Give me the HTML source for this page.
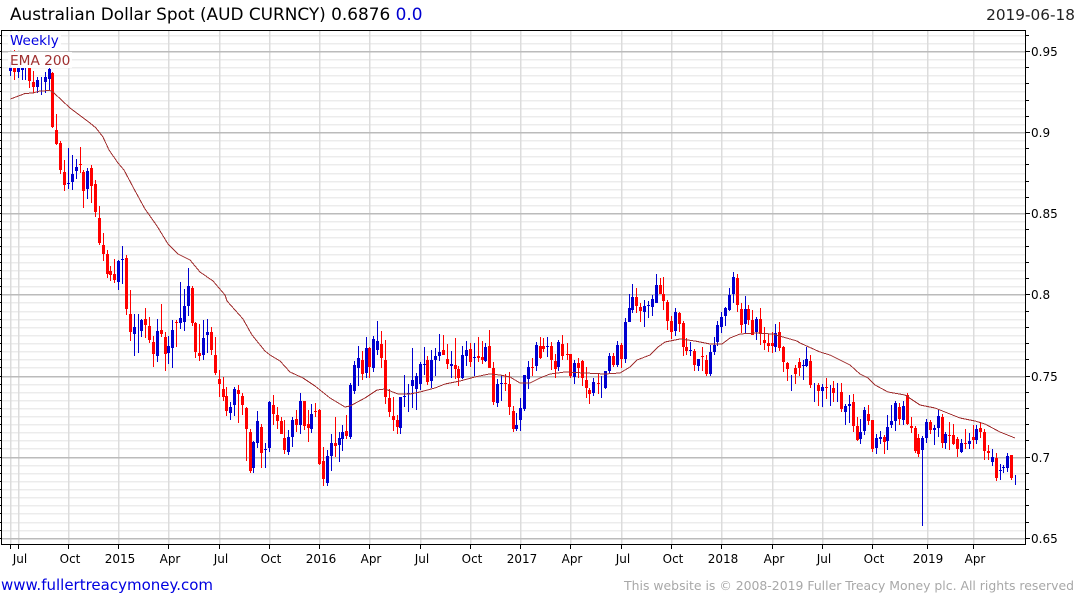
<!DOCTYPE html>
<html><head><meta charset="utf-8"><title>Australian Dollar Spot</title>
<style>
html,body{margin:0;padding:0;background:#fff;width:1075px;height:600px;overflow:hidden}
svg{display:block}
text{font-family:"DejaVu Sans",sans-serif}
</style></head><body>
<svg width="1075" height="600" viewBox="0 0 1075 600" xmlns="http://www.w3.org/2000/svg">
<rect width="1075" height="600" fill="#fff"/>
<g fill="none" stroke-width="1.5">
<path transform="translate(0,.25)" stroke="#ececec" d="M2 35.5H1025M2 43.5H1025M2 59.5H1025M2 67.5H1025M2 75.5H1025M2 83.5H1025M2 91.5H1025M2 100.5H1025M2 108.5H1025M2 116.5H1025M2 124.5H1025M2 140.5H1025M2 148.5H1025M2 156.5H1025M2 164.5H1025M2 173.5H1025M2 181.5H1025M2 189.5H1025M2 197.5H1025M2 205.5H1025M2 221.5H1025M2 229.5H1025M2 237.5H1025M2 246.5H1025M2 254.5H1025M2 262.5H1025M2 270.5H1025M2 278.5H1025M2 286.5H1025M2 302.5H1025M2 311.5H1025M2 319.5H1025M2 327.5H1025M2 335.5H1025M2 343.5H1025M2 351.5H1025M2 359.5H1025M2 367.5H1025M2 384.5H1025M2 392.5H1025M2 400.5H1025M2 408.5H1025M2 416.5H1025M2 424.5H1025M2 432.5H1025M2 440.5H1025M2 448.5H1025M2 465.5H1025M2 473.5H1025M2 481.5H1025M2 489.5H1025M2 497.5H1025M2 505.5H1025M2 513.5H1025M2 522.5H1025M2 530.5H1025"/>
<path transform="translate(.25,0)" stroke="#dcdcdc" d="M10.5 31V544M18.5 31V544M68.5 31V544M118.5 31V544M168.5 31V544M219.5 31V544M269.5 31V544M319.5 31V544M369.5 31V544M420.5 31V544M470.5 31V544M520.5 31V544M570.5 31V544M621.5 31V544M671.5 31V544M721.5 31V544M772.5 31V544M822.5 31V544M872.5 31V544M927.5 31V544M973.5 31V544"/>
<path transform="translate(0,.25)" stroke="#bbb" d="M2 51.5H1025M2 132.5H1025M2 213.5H1025M2 294.5H1025M2 376.5H1025M2 457.5H1025M2 538.5H1025"/>
</g>
<g shape-rendering="crispEdges" fill="none">
<path stroke="#000" d="M1.5 30.5H1025.5V544.5H1.5Z"/>
<path stroke="#000" d="M0 35.5H1M0 43.5H1M0 51.5H1M0 59.5H1M0 67.5H1M0 75.5H1M0 83.5H1M0 91.5H1M0 100.5H1M0 108.5H1M0 116.5H1M0 124.5H1M0 132.5H1M0 140.5H1M0 148.5H1M0 156.5H1M0 164.5H1M0 173.5H1M0 181.5H1M0 189.5H1M0 197.5H1M0 205.5H1M0 213.5H1M0 221.5H1M0 229.5H1M0 237.5H1M0 246.5H1M0 254.5H1M0 262.5H1M0 270.5H1M0 278.5H1M0 286.5H1M0 294.5H1M0 302.5H1M0 311.5H1M0 319.5H1M0 327.5H1M0 335.5H1M0 343.5H1M0 351.5H1M0 359.5H1M0 367.5H1M0 376.5H1M0 384.5H1M0 392.5H1M0 400.5H1M0 408.5H1M0 416.5H1M0 424.5H1M0 432.5H1M0 440.5H1M0 448.5H1M0 457.5H1M0 465.5H1M0 473.5H1M0 481.5H1M0 489.5H1M0 497.5H1M0 505.5H1M0 513.5H1M0 522.5H1M0 530.5H1M0 538.5H1"/>
<path stroke="#000" d="M1026 35.5H1029M1026 51.5H1030M1026 67.5H1029M1026 83.5H1029M1026 100.5H1029M1026 116.5H1029M1026 132.5H1030M1026 148.5H1029M1026 164.5H1029M1026 181.5H1029M1026 197.5H1029M1026 213.5H1030M1026 229.5H1029M1026 246.5H1029M1026 262.5H1029M1026 278.5H1029M1026 294.5H1030M1026 311.5H1029M1026 327.5H1029M1026 343.5H1029M1026 359.5H1029M1026 376.5H1030M1026 392.5H1029M1026 408.5H1029M1026 424.5H1029M1026 440.5H1029M1026 457.5H1030M1026 473.5H1029M1026 489.5H1029M1026 505.5H1029M1026 522.5H1029M1026 538.5H1030"/>
<path stroke="#000" d="M10.5 545V549M18.5 545V549M68.5 545V549M118.5 545V549M168.5 545V549M219.5 545V549M269.5 545V549M319.5 545V549M369.5 545V549M420.5 545V549M470.5 545V549M520.5 545V549M570.5 545V549M621.5 545V549M671.5 545V549M721.5 545V549M772.5 545V549M822.5 545V549M872.5 545V549M927.5 545V549M973.5 545V549"/>
<!-- blue wicks -->
<path stroke="#0000d0" d="M10.5 62V76M18.5 68V78M22.5 68V80M25.5 68V80M37.5 77V93M41.5 77V95M45.5 72V93M49.5 68V90M68.5 148V189M72.5 155V190M76.5 159V179M87.5 168V199M118.5 260V290M122.5 246V284M134.5 314V356M138.5 314V353M141.5 319V337M157.5 319V362M168.5 336V364M172.5 320V368M180.5 282V329M184.5 289V331M188.5 268V316M203.5 320V360M207.5 319V353M230.5 402V420M234.5 387V416M253.5 441V473M257.5 411V448M265.5 443V468M269.5 401V452M288.5 430V455M292.5 417V447M300.5 393V434M311.5 404V433M327.5 450V486M331.5 434V471M339.5 432V462M342.5 425V451M350.5 383V439M354.5 361V394M358.5 346V386M366.5 337V378M373.5 336V372M377.5 321V355M400.5 397V434M404.5 375V407M408.5 384V412M412.5 348V408M416.5 373V410M420.5 362V390M424.5 347V375M431.5 350V388M435.5 348V376M439.5 334V361M451.5 351V378M462.5 346V379M466.5 341V366M474.5 343V376M485.5 343V362M497.5 379V407M501.5 375V401M516.5 413V431M520.5 398V431M524.5 375V411M528.5 361V389M536.5 342V371M547.5 337V357M558.5 340V371M574.5 360V384M593.5 378V396M601.5 376V398M605.5 371V389M609.5 353V374M617.5 341V367M625.5 318V363M629.5 294V322M632.5 284V313M644.5 300V327M648.5 301V318M652.5 295V316M656.5 274V303M675.5 308V336M690.5 342V356M698.5 359V371M710.5 345V376M714.5 337V355M717.5 321V346M721.5 312V333M725.5 307V326M729.5 288V311M733.5 272V303M745.5 296V333M756.5 317V340M775.5 324V352M791.5 375V391M803.5 360V380M806.5 347V367M814.5 383V402M822.5 384V407M830.5 385V406M837.5 383V402M845.5 404V425M849.5 395V423M860.5 419V444M864.5 407V435M876.5 434V454M880.5 431V444M887.5 415V450M891.5 405V428M895.5 401V431M903.5 401V425M922.5 436V526M926.5 419V443M934.5 425V445M938.5 409V437M945.5 432V449M961.5 439V453M969.5 433V449M976.5 425V444M992.5 449V466M1000.5 464V480M1003.5 465V473M1007.5 453V472M1015.5 475V485"/>
<!-- blue bodies -->
<path stroke="#0000d0" stroke-width="3" d="M10.5 67V71M18.5 68V72M22.5 68V70M37.5 80V87M45.5 77V82M49.5 69V79M68.5 183V184M72.5 174V182M76.5 167V171M87.5 171V189M118.5 261V282M122.5 259V260M134.5 327V334M141.5 320V331M157.5 331V356M168.5 346V353M172.5 330V348M180.5 318V323M184.5 306V322M188.5 286V306M203.5 338V355M207.5 332V335M230.5 407V413M234.5 389V405M253.5 442V468M257.5 421V443M265.5 449V450M269.5 402V448M288.5 437V452M292.5 420V437M300.5 401V425M311.5 414V429M327.5 456V483M331.5 443V456M339.5 438V445M342.5 432V439M350.5 385V437M354.5 365V391M358.5 358V368M366.5 348V373M373.5 339V368M377.5 341V350M400.5 397V428M404.5 396V397M408.5 393V394M412.5 380V386M416.5 376V389M420.5 364V384M424.5 364V365M431.5 360V381M435.5 356V360M439.5 352V356M451.5 364V366M462.5 355V378M466.5 350V356M474.5 357V358M485.5 347V361M497.5 384V403M501.5 383V384M516.5 425V429M520.5 408V420M524.5 375V409M528.5 367V379M536.5 345V366M547.5 346V347M558.5 342V367M574.5 363V377M593.5 382V393M605.5 371V388M609.5 356V371M617.5 345V365M625.5 322V359M629.5 308V322M632.5 297V310M644.5 306V312M648.5 305V306M652.5 299V307M656.5 285V303M675.5 312V331M690.5 350V351M698.5 359V366M710.5 352V374M714.5 345V352M717.5 325V342M721.5 317V327M725.5 308V316M729.5 295V310M733.5 277V294M745.5 309V324M756.5 319V332M775.5 333V347M803.5 365V366M806.5 359V366M822.5 387V391M845.5 406V412M849.5 404V406M860.5 432V439M864.5 410V431M876.5 438V448M880.5 437V439M887.5 427V441M891.5 421V425M895.5 403V421M903.5 406V420M922.5 438V450M926.5 422V438M934.5 428V430M938.5 416V428M945.5 434V443M961.5 443V452M969.5 441V444M976.5 429V440M992.5 457V462M1000.5 470V471M1003.5 467V468M1007.5 456V468"/>
<!-- red wicks -->
<path stroke="#f00" d="M14.5 50V51M14.5 68V80M29.5 68V88M33.5 71V93M52.5 72V128M56.5 114V145M60.5 141V174M64.5 160V191M80.5 147V173M83.5 170V208M91.5 165V203M95.5 180V217M99.5 206V245M103.5 233V261M107.5 250V278M110.5 266V281M114.5 259V283M126.5 255V315M130.5 290V341M145.5 308V338M149.5 317V343M153.5 336V367M161.5 304V337M165.5 332V371M176.5 320V347M192.5 286V326M195.5 322V358M199.5 324V361M211.5 327V355M215.5 337V375M219.5 370V397M223.5 377V401M226.5 387V416M238.5 385V423M242.5 393V415M246.5 407V461M250.5 429V473M261.5 424V468M273.5 395V425M277.5 407V429M281.5 417V434M284.5 420V454M296.5 410V432M304.5 401V430M308.5 410V442M315.5 403V417M319.5 409V465M323.5 447V486M335.5 417V457M346.5 415V439M362.5 351V380M369.5 347V378M381.5 331V368M385.5 340V404M389.5 389V417M393.5 397V431M397.5 415V434M427.5 356V385M443.5 335V355M447.5 344V369M455.5 338V379M458.5 366V386M470.5 343V367M478.5 337V362M482.5 341V364M489.5 330V368M493.5 362V405M505.5 374V391M509.5 372V415M513.5 406V432M532.5 358V376M540.5 337V359M543.5 338V352M551.5 342V370M555.5 354V378M562.5 335V360M567.5 343V360M570.5 354V378M578.5 358V378M582.5 360V386M586.5 367V398M589.5 388V404M598.5 373V394M613.5 353V367M621.5 343V368M636.5 288V313M640.5 303V322M660.5 278V294M663.5 277V310M667.5 300V330M671.5 316V339M679.5 312V332M683.5 321V356M686.5 338V355M694.5 349V371M702.5 347V371M706.5 355V376M737.5 274V312M741.5 303V333M748.5 305V325M752.5 310V335M760.5 308V345M764.5 327V350M768.5 334V352M772.5 332V353M779.5 322V351M783.5 346V372M787.5 362V381M795.5 365V384M799.5 358V376M810.5 355V388M818.5 383V406M826.5 378V399M833.5 381V402M841.5 383V412M853.5 394V432M857.5 417V441M868.5 405V425M872.5 420V452M884.5 435V454M899.5 403V425M907.5 393V425M911.5 417V433M915.5 426V453M918.5 434V457M930.5 420V434M942.5 414V448M949.5 422V450M953.5 424V445M957.5 437V457M965.5 429V449M973.5 425V449M980.5 423V438M984.5 429V460M988.5 445V460M996.5 453V481M1011.5 455V480"/>
<!-- red bodies -->
<path stroke="#f00" stroke-width="3" d="M14.5 68V72M29.5 68V81M33.5 82V87M52.5 73V127M56.5 130V144M60.5 143V170M64.5 172V185M80.5 164V165M83.5 172V191M91.5 168V186M95.5 184V212M99.5 218V243M103.5 245V254M107.5 254V274M110.5 271V275M114.5 274V280M126.5 258V309M130.5 314V332M145.5 319V325M149.5 326V340M153.5 342V354M161.5 330V334M165.5 337V354M176.5 322V323M192.5 288V323M195.5 323V352M199.5 353V356M211.5 332V350M215.5 355V373M219.5 379V384M223.5 389V397M226.5 396V411M238.5 390V394M242.5 396V405M246.5 408V429M250.5 432V471M261.5 427V453M273.5 405V414M277.5 415V421M281.5 421V434M284.5 438V450M296.5 419V425M304.5 401V426M308.5 424V428M315.5 411V412M319.5 410V464M323.5 461V479M335.5 443V446M346.5 431V436M362.5 360V374M369.5 348V367M381.5 344V358M385.5 360V397M389.5 398V412M393.5 416V420M397.5 420V427M427.5 360V382M443.5 350V355M447.5 359V364M455.5 365V369M458.5 369V378M470.5 349V362M478.5 356V358M482.5 357V360M489.5 346V368M493.5 368V402M505.5 383V384M509.5 384V407M513.5 411V429M532.5 367V368M540.5 346V358M543.5 346V349M551.5 346V360M555.5 361V369M562.5 344V356M567.5 354V355M570.5 354V376M578.5 363V368M582.5 361V378M586.5 380V388M589.5 390V394M598.5 383V384M613.5 356V365M621.5 345V359M636.5 297V306M640.5 307V311M660.5 285V294M663.5 294V301M667.5 302V321M671.5 321V332M679.5 313V324M683.5 323V347M686.5 347V351M694.5 351V365M702.5 356V357M706.5 360V374M737.5 278V305M741.5 309V325M748.5 309V320M752.5 320V335M760.5 319V334M764.5 340V343M768.5 343V346M772.5 343V346M779.5 332V348M783.5 347V362M787.5 363V369M795.5 368V374M799.5 362V368M810.5 361V385M818.5 385V391M826.5 387V388M833.5 388V393M841.5 392V409M853.5 402V426M857.5 426V440M868.5 414V421M872.5 420V449M884.5 437V442M899.5 407V419M907.5 395V424M911.5 426V428M915.5 428V451M918.5 438V454M930.5 422V430M942.5 417V443M949.5 435V436M953.5 435V444M957.5 439V449M965.5 443V444M973.5 437V440M980.5 428V432M984.5 432V451M988.5 451V453M996.5 458V478M1011.5 455V478"/>
<!-- EMA 200 -->
<polyline stroke="#a03030" points="10.5,99 25,93.5 33,93 40,91 50,90.5 54,93 70,108 90,123 96,128 103,137 109,150 118,163 124,170 133,187 145,209 157,226 168,244 178,254 190,260 200,272 213,281 225,295 227,301 243,319 252,335 265,351 270,355 280,361 290,372 303,378 315,386 330,398 345,407 350,406 365,398 377,390 385,389 398,394 410,394 420,392 435,388 445,384 460,381 475,377 489,374 500,375 510,377 520,383 530,383 540,378 550,374 565,372 585,373 605,374 620,373 630,367 637,360 650,355 658,347 665,342 680,339 695,341 710,344 722,344 730,338 740,334 755,333 773,334 783,337 797,341 800,343 820,352 830,355 850,365 860,374 868,378 875,385 888,392 905,395 920,405 935,408 950,414 960,418 975,421 985,424 1000,432 1015,438"/>
</g>
<rect x="8" y="32" width="53" height="18" fill="#fff" fill-opacity=".85"/>
<rect x="8" y="52" width="64" height="16" fill="#fff" fill-opacity=".85"/>
<text x="10" y="45" font-size="13.5" fill="#0000e0">Weekly</text>
<text x="10" y="65" font-size="13.7" fill="#a03030">EMA 200</text>
<text x="10" y="20" font-size="16.9" fill="#000">Australian Dollar Spot (AUD CURNCY) 0.6876 <tspan fill="#0000d0">0.0</tspan></text>
<text x="1075" y="20" font-size="15.3" fill="#222" text-anchor="end">2019-06-18</text>
<g font-size="12" fill="#000">
<text x="1031" y="56">0.95</text>
<text x="1031" y="137">0.9</text>
<text x="1031" y="218">0.85</text>
<text x="1031" y="299">0.8</text>
<text x="1031" y="381">0.75</text>
<text x="1031" y="462">0.7</text>
<text x="1031" y="543">0.65</text>
</g>
<g font-size="12" fill="#000" text-anchor="middle">
<text x="20" y="563">Jul</text>
<text x="70" y="563">Oct</text>
<text x="120" y="563">2015</text>
<text x="170" y="563">Apr</text>
<text x="221" y="563">Jul</text>
<text x="271" y="563">Oct</text>
<text x="321" y="563">2016</text>
<text x="371" y="563">Apr</text>
<text x="422" y="563">Jul</text>
<text x="472" y="563">Oct</text>
<text x="522" y="563">2017</text>
<text x="572" y="563">Apr</text>
<text x="623" y="563">Jul</text>
<text x="673" y="563">Oct</text>
<text x="723" y="563">2018</text>
<text x="774" y="563">Apr</text>
<text x="824" y="563">Jul</text>
<text x="874" y="563">Oct</text>
<text x="928" y="563">2019</text>
<text x="975" y="563">Apr</text>
</g>
<text x="1" y="590" font-size="15" fill="#0000e0">www.fullertreacymoney.com</text>
<text x="1074" y="590" font-size="12.43" fill="#a8a8a8" text-anchor="end">This website is © 2008-2019 Fuller Treacy Money plc. All rights reserved</text>
</svg>
</body></html>
